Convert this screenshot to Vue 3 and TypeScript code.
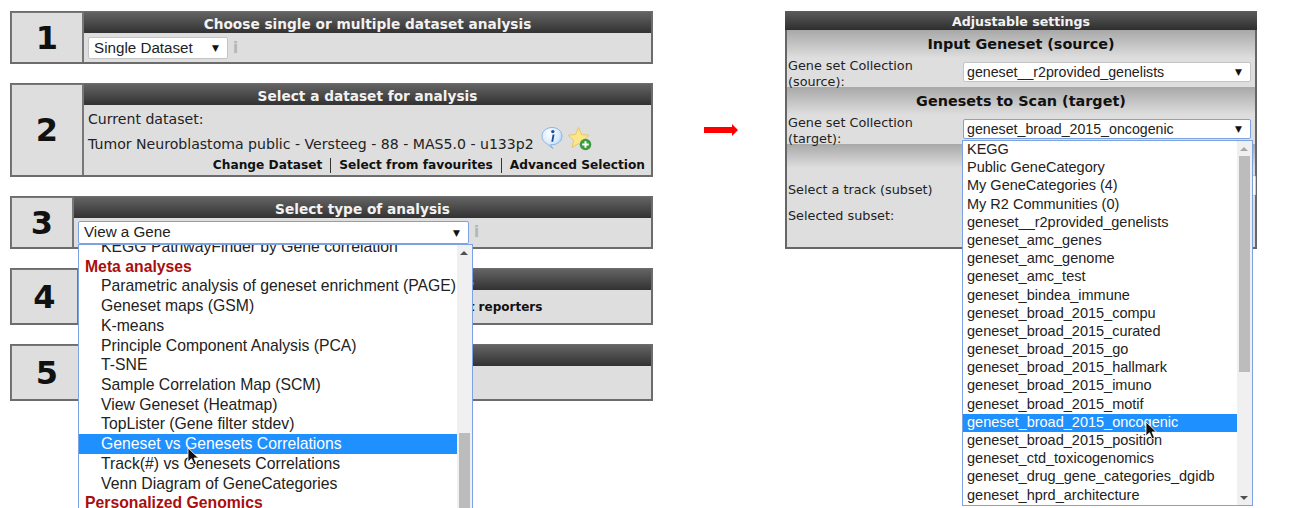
<script setup lang="ts">
const metaItems = [
  'Parametric analysis of geneset enrichment (PAGE)',
  'Geneset maps (GSM)',
  'K-means',
  'Principle Component Analysis (PCA)',
  'T-SNE',
  'Sample Correlation Map (SCM)',
  'View Geneset (Heatmap)',
  'TopLister (Gene filter stdev)',
  'Geneset vs Genesets Correlations',
  'Track(#) vs Genesets Correlations',
  'Venn Diagram of GeneCategories',
]

const collections = [
  'KEGG',
  'Public GeneCategory',
  'My GeneCategories (4)',
  'My R2 Communities (0)',
  'geneset__r2provided_genelists',
  'geneset_amc_genes',
  'geneset_amc_genome',
  'geneset_amc_test',
  'geneset_bindea_immune',
  'geneset_broad_2015_compu',
  'geneset_broad_2015_curated',
  'geneset_broad_2015_go',
  'geneset_broad_2015_hallmark',
  'geneset_broad_2015_imuno',
  'geneset_broad_2015_motif',
  'geneset_broad_2015_oncogenic',
  'geneset_broad_2015_position',
  'geneset_ctd_toxicogenomics',
  'geneset_drug_gene_categories_dgidb',
  'geneset_hprd_architecture',
]
</script>

<template>
  <div class="page">
    <div class="steps">
      <section class="panel">
        <div class="num">1</div>
        <div class="main">
          <h2 class="head">Choose single or multiple dataset analysis</h2>
          <div class="body body-1">
            <div class="sel sel-single">Single Dataset<span class="caret">▼</span></div>
            <span class="info">i</span>
          </div>
        </div>
      </section>

      <section class="panel">
        <div class="num">2</div>
        <div class="main">
          <h2 class="head">Select a dataset for analysis</h2>
          <div class="body body-2">
            <div class="line-current">Current dataset:</div>
            <div class="line-ds">
              Tumor Neuroblastoma public - Versteeg - 88 - MAS5.0 - u133p2
              <svg class="ic-info" width="24" height="24" viewBox="0 0 24 24">
                <defs>
                  <radialGradient id="bub" cx="0.4" cy="0.3" r="0.8">
                    <stop offset="0" stop-color="#ffffff" />
                    <stop offset="0.6" stop-color="#d6e8fb" />
                    <stop offset="1" stop-color="#82b2ea" />
                  </radialGradient>
                </defs>
                <path d="M12 1.5c5.6 0 10 3.7 10 8.6s-4.4 8.6-10 8.6c-.6 0-1.2 0-1.7-.1L13 22.8 6.8 17.700C3.700 16.200 2 13.400 2 10.100 2 5.200 6.400 1.500 12 1.500z" fill="url(#bub)" stroke="#8fb5e3" stroke-width="1" />
                <circle cx="12.800" cy="5.600" r="1.700" fill="#1c4f9c" />
                <path d="M12.600 8.500l-1.300 7.200h1.900l1.300-7.200z" fill="#1c4f9c" />
              </svg>
              <svg class="ic-star" width="26" height="26" viewBox="0 0 26 26">
                <path d="M11.500 1.500l3 7 7.500.7-5.700 5 1.700 7.300-6.500-3.900-6.500 3.900 1.700-7.300-5.700-5 7.500-.7z" fill="#fde58a" stroke="#e9c767" stroke-width="1" stroke-linejoin="round" />
                <circle cx="18.500" cy="18.500" r="5.800" fill="#3d9a3d" />
                <path d="M18.500 15.200v6.600M15.200 18.500h6.600" stroke="#fff" stroke-width="2" />
              </svg>
            </div>
            <div class="links">
              <span>Change Dataset</span><i class="bar"></i><span>Select from favourites</span><i class="bar"></i><span>Advanced Selection</span>
            </div>
          </div>
        </div>
      </section>

      <section class="panel panel-3">
        <div class="num num-3">3</div>
        <div class="main">
          <h2 class="head">Select type of analysis</h2>
          <div class="body body-3">
            <div class="sel sel-type">View a Gene<span class="caret">▼</span></div>
            <span class="info">i</span>
          </div>
        </div>
        <div class="drop drop-type">
          <div class="drop-list">
            <div class="opt opt-cut">KEGG PathwayFinder by Gene correlation</div>
            <div class="grp">Meta analyses</div>
            <div
              v-for="item in metaItems"
              :key="item"
              class="opt"
              :class="{ hi: item === 'Geneset vs Genesets Correlations' }"
            >{{ item }}</div>
            <div class="grp">Personalized Genomics</div>
          </div>
          <div class="sbar">
            <span class="tri tri-up"></span>
            <span class="thumb thumb-type"></span>
          </div>
          <svg class="cursor cursor-type" width="13" height="19" viewBox="0 0 13 19">
            <path d="M1 1v14l3.500-3.300 2.500 6 2.500-1-2.500-5.700h4.500z" fill="#111" stroke="#fff" stroke-width="0.800" />
          </svg>
        </div>
      </section>

      <section class="panel panel-4">
        <div class="num num-4">4</div>
        <div class="main">
          <h2 class="head">Choose analysis parameters</h2>
          <div class="body body-4"><b>Use the best reporters</b></div>
        </div>
      </section>

      <section class="panel panel-5">
        <div class="num">5</div>
        <div class="main">
          <h2 class="head">Get results</h2>
          <div class="body body-5"></div>
        </div>
      </section>
    </div>

    <div class="arrow-col">
      <svg width="34" height="12" viewBox="0 0 34 12">
        <path d="M0 3h28V0l6 6-6 6V9H0z" fill="#ff0000" />
      </svg>
    </div>

    <section class="settings">
      <h2 class="set-title">Adjustable settings</h2>
      <h3 class="set-sec">Input Geneset (source)</h3>
      <div class="set-row">
        <label class="set-label">Gene set Collection<br />(source):</label>
        <div class="sel sel-wide">geneset__r2provided_genelists<span class="caret">▼</span></div>
      </div>
      <h3 class="set-sec">Genesets to Scan (target)</h3>
      <div class="set-row">
        <label class="set-label">Gene set Collection<br />(target):</label>
        <div class="sel sel-wide sel-open">geneset_broad_2015_oncogenic<span class="caret">▼</span></div>
      </div>
      <div class="set-sec set-sec-blank"></div>
      <div class="set-rest">
        <div class="rest-track">Select a track (subset)<div class="sel sel-hidden"></div></div>
        <div class="rest-sub">Selected subset:</div>
      </div>
      <div class="drop drop-coll">
        <div class="drop-list">
          <div
            v-for="item in collections"
            :key="item"
            class="opt-coll"
            :class="{ hi: item === 'geneset_broad_2015_oncogenic' }"
          >{{ item }}</div>
        </div>
        <div class="sbar">
          <span class="tri tri-up tri-pale"></span>
          <span class="thumb thumb-coll"></span>
          <span class="tri tri-down"></span>
        </div>
        <svg class="cursor cursor-coll" width="13" height="19" viewBox="0 0 13 19">
          <path d="M1 1v14l3.500-3.300 2.500 6 2.500-1-2.500-5.700h4.500z" fill="#111" stroke="#fff" stroke-width="0.800" />
        </svg>
      </div>
    </section>
  </div>
</template>

<style>
html,
body {
  margin: 0;
  background: #fff;
  overflow: hidden;
}
</style>

<style scoped>
.page {
  display: flex;
  align-items: flex-start;
  width: 1296px;
  height: 508px;
  overflow: hidden;
  background: #fff;
  font-family: "DejaVu Sans", sans-serif;
  color: #222;
}

.steps {
  display: flex;
  flex-direction: column;
  gap: 19px;
  width: 643px;
  margin: 11px 0 0 10px;
}

.panel {
  position: relative;
  display: flex;
  box-sizing: border-box;
  border: 1px solid #6c6c6c;
  border-width: 1px 2px 2px 1px;
  background: #dedede;
}

.num {
  display: flex;
  align-items: center;
  justify-content: center;
  flex: none;
  box-sizing: border-box;
  width: 73px;
  border: 1px solid #777;
  border-width: 1px 2px 0 1px;
  font-size: 32px;
  font-weight: 700;
  color: #111;
}

.num-3 {
  width: 63px;
}

.num-4 {
  width: 68px;
}

.main {
  flex: 1;
  min-width: 0;
}

.head {
  margin: 0;
  height: 21px;
  overflow: hidden;
  background: linear-gradient(#646464, #323232);
  color: #f2f2f2;
  font-size: 13.7px;
  font-weight: 700;
  line-height: 24px;
  text-align: center;
}

.body {
  box-sizing: border-box;
}

.body-1 {
  display: flex;
  align-items: flex-start;
  height: 29px;
  padding: 4px 0 0 4px;
}

.body-2 {
  height: 70px;
  padding: 5px 0 0 4px;
  font-size: 14.1px;
}

.body-3 {
  display: flex;
  align-items: flex-start;
  height: 29px;
  padding: 3px 0 0 4px;
}

.body-4 {
  height: 33px;
  padding: 8px 0 0 310px;
  font-size: 12px;
  line-height: 18px;
  color: #111;
  white-space: nowrap;
}

.body-5 {
  height: 33px;
}

.sel {
  position: relative;
  box-sizing: border-box;
  border: 1px solid #c4c4c4;
  border-radius: 2px;
  background: #fff;
  font-family: "Liberation Sans", Arial, sans-serif;
  color: #222;
  white-space: nowrap;
}

.caret {
  position: absolute;
  top: 50%;
  right: 8px;
  font-family: "DejaVu Sans", sans-serif;
  font-size: 9px;
  line-height: 10px;
  margin-top: -5px;
  color: #111;
}

.sel-single {
  width: 140px;
  height: 22px;
  padding-left: 5px;
  font-size: 15.2px;
  line-height: 20px;
}

.sel-type {
  width: 391px;
  height: 23px;
  padding-left: 5px;
  border-color: #7da2e4;
  font-size: 15.2px;
  line-height: 20px;
}

.info {
  margin-left: 5px;
  font-size: 15px;
  font-weight: 700;
  line-height: 22px;
  color: #b4b4b4;
}

.line-current {
  line-height: 18px;
}

.line-ds {
  display: flex;
  align-items: center;
  height: 26px;
  margin-top: 3px;
  white-space: nowrap;
}

.ic-info {
  flex: none;
  margin: -13px 0 0 6px;
}

.ic-star {
  flex: none;
  margin: -11px 0 0 3px;
}

.links {
  display: flex;
  align-items: center;
  justify-content: flex-end;
  margin: 0 6px 0 0;
  font-size: 12.2px;
  font-weight: 700;
  line-height: 16px;
  color: #111;
}

.bar {
  width: 1px;
  height: 15px;
  margin: 0 8px;
  background: #333;
}

.drop {
  position: absolute;
  z-index: 2;
  display: flex;
  box-sizing: border-box;
  overflow: hidden;
  border: 1px solid #7da2e4;
  background: #fff;
  font-family: "Liberation Sans", Arial, sans-serif;
  color: #222;
  white-space: nowrap;
}

.drop-type {
  left: 67px;
  top: 47px;
  width: 395px;
  height: 280px;
  border-bottom: 0;
}

.drop-list {
  flex: 1;
  min-width: 0;
}

.opt,
.grp {
  height: 19.72px;
  font-size: 15.75px;
  line-height: 19.72px;
}

.opt {
  padding-left: 22px;
}

.opt-cut {
  margin-top: -8px;
}

.grp {
  padding-left: 6px;
  font-weight: 700;
  color: #a80f0f;
}

.opt-coll {
  height: 18.2px;
  padding-left: 4px;
  font-size: 14.5px;
  line-height: 16.2px;
}

.hi {
  background: #1e90ff;
  color: #fff;
}

.sbar {
  position: relative;
  flex: none;
  width: 15px;
  background: #f0f0f0;
}

.tri {
  position: absolute;
  left: 3px;
  width: 0;
  height: 0;
  border-left: 4px solid transparent;
  border-right: 4px solid transparent;
}

.tri-up {
  top: 6px;
  border-bottom: 4px solid #505050;
}

.tri-pale {
  border-bottom-color: #a8a8a8;
}

.tri-down {
  bottom: 5px;
  border-top: 4px solid #505050;
}

.thumb {
  position: absolute;
  left: 2px;
  right: 2px;
  background: #bcbcbc;
}

.thumb-type {
  top: 188px;
  bottom: 0;
}

.thumb-coll {
  top: 15px;
  height: 216px;
}

.cursor {
  position: absolute;
}

.cursor-type {
  left: 108px;
  top: 202px;
}

.cursor-coll {
  left: 182px;
  top: 280px;
}

.arrow-col {
  flex: none;
  width: 34px;
  margin: 124px 47px 0 51px;
  line-height: 0;
}

.settings {
  position: relative;
  flex: none;
  box-sizing: border-box;
  width: 472px;
  height: 238px;
  margin-top: 11px;
  border: 2px solid #666;
  border-top: 0;
  background: #dedede;
}

.set-title {
  margin: 0 -2px;
  height: 19px;
  background: linear-gradient(#5c5c5c, #2e2e2e);
  color: #f2f2f2;
  font-size: 12.6px;
  font-weight: 700;
  line-height: 21px;
  text-align: center;
}

.set-sec {
  margin: 0;
  height: 28px;
  background: linear-gradient(#a8a8a8, #dedede);
  color: #111;
  font-size: 14.4px;
  font-weight: 700;
  line-height: 28px;
  text-align: center;
}

.set-sec-blank {
  height: 24px;
}

.set-row {
  display: flex;
  height: 29px;
}

.set-label {
  flex: none;
  width: 175px;
  padding-left: 1px;
  font-size: 12.8px;
  line-height: 16px;
}

.sel-wide {
  width: 288px;
  height: 20px;
  margin-top: 4px;
  padding-left: 3px;
  font-size: 14.2px;
  line-height: 18px;
}

.sel-open {
  border-color: #7da2e4;
}

.set-rest {
  padding-left: 1px;
  font-size: 12.8px;
}

.rest-track {
  position: relative;
  padding-top: 13px;
  line-height: 18px;
}

.sel-hidden {
  position: absolute;
  left: 176px;
  top: 7px;
  width: 292px;
  height: 21px;
}

.rest-sub {
  margin-top: 8px;
  line-height: 18px;
}

.drop-coll {
  left: 175px;
  top: 129px;
  width: 291px;
  height: 366px;
}
</style>
